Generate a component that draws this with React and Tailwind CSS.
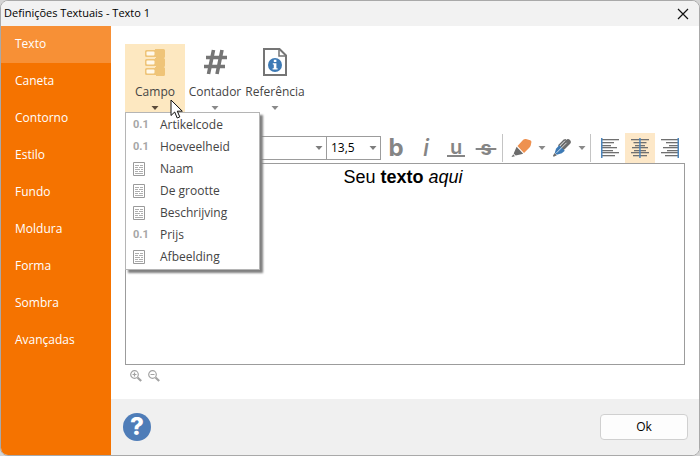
import React, { useState } from 'react';

const TABS = ['Texto', 'Caneta', 'Contorno', 'Estilo', 'Fundo', 'Moldura', 'Forma', 'Sombra', 'Avançadas'];

const FIELDS = [
  { label: 'Artikelcode', type: 'number' },
  { label: 'Hoeveelheid', type: 'number' },
  { label: 'Naam', type: 'text' },
  { label: 'De grootte', type: 'text' },
  { label: 'Beschrijving', type: 'text' },
  { label: 'Prijs', type: 'number' },
  { label: 'Afbeelding', type: 'text' },
];

const Caret = ({ className = '' }) => (
  <svg viewBox="0 0 8 4" className={`pointer-events-none h-1 w-2 shrink-0 ${className}`} aria-hidden="true">
    <path d="M0.5 0h7L4 4z" fill="currentColor" />
  </svg>
);

const FieldIcon = () => (
  <svg viewBox="0 0 22 28" className="h-7 w-[22px]" aria-hidden="true">
    {[1, 10, 19].map(y => (
      <g key={y} transform={`translate(0 ${y})`}>
        <path d="M2.500 1H11V0h8.500q1.500 0 1.500 1.500v6q0 1.500-1.500 1.500H12V8H2.500Q1 8 1 6.500v-4Q1 1 2.500 1z" fill="#efc478" />
        <rect x="2.500" y="2.500" width="8" height="4" rx="1" fill="#fff8ea" />
      </g>
    ))}
  </svg>
);

const CounterIcon = () => (
  <svg viewBox="0 0 24 26" className="h-[26px] w-6" fill="none" stroke="#757575" strokeWidth="3.6" aria-hidden="true">
    <path d="M10.500 1L5.500 25M19 1l-5 24M3 8.500h21M1 17.500h21" />
  </svg>
);

const ReferenceIcon = () => (
  <svg viewBox="0 0 24 28" className="h-7 w-6" aria-hidden="true">
    <path d="M1 1h15.500L23 7.500V27H1z" fill="#fff" stroke="#757575" strokeWidth="2" />
    <path d="M16 1.500V8h6.500" fill="none" stroke="#757575" strokeWidth="1.500" />
    <circle cx="12" cy="17" r="7" fill="#3d7ab5" />
    <path d="M10.800 11.800h2.600v2.200h-2.600zM9.800 15.200h3.600v5h1.200v1.400H9.600v-1.400h1.200v-3.600h-1z" fill="#fff" />
  </svg>
);

const TextFieldIcon = () => (
  <svg viewBox="0 0 12 14" className="h-3.5 w-3" fill="none" stroke="#9a9a9a" aria-hidden="true">
    <path d="M.5.5h11v13H.5z" />
    <path d="M2 3.500h4M7 3.500h3M2 5.500h3M6 5.500h4M2 7.500h5M8 7.500h2M2 9.500h3M6 9.500h4M2 11.500h8" strokeOpacity=".8" />
  </svg>
);

const MarkerIcon = () => (
  <svg viewBox="0 0 21 20" className="h-5 w-[21px]" aria-hidden="true">
    <path d="M12.200 1.800Q13.500.6 15 1l4.200 1.300q1.500.5 1.200 2l-.7 3.200q-.3 1.200-1.200 2L13 15 6.500 8z" fill="#ee9150" />
    <path d="M5.600 8.800l6.600 7-3 .7-4.500 1-2-2z" fill="#6c6c6c" />
    <path d="M2.200 16.300L4 18.200l-3.500.8z" fill="#6c6c6c" />
  </svg>
);

const PenIcon = () => (
  <svg viewBox="0 0 20 20" className="size-5" fill="none" aria-hidden="true">
    <path d="M11 9l5-5" stroke="#6c6c6c" strokeWidth="5.500" strokeLinecap="round" />
    <path d="M6.500 7.800L12 2.200l2-.4" stroke="#6c6c6c" strokeWidth="1.400" />
    <path d="M7.200 7.200l5.600 5.600-3 2.500-5 1.500-2-2 1.200-4z" fill="#3d7ab5" />
    <path d="M4.500 14.800L14.500 4.800" stroke="#fff" strokeWidth="1" strokeOpacity=".75" />
    <path d="M2.600 15l2.200 2.200-3 1.600-1-.9z" fill="#6c6c6c" />
  </svg>
);

const LINES = [
  { y: 1, w: 18 },
  { y: 4, w: 13 },
  { y: 7, w: 10 },
  { y: 9, w: 16 },
  { y: 12, w: 12 },
  { y: 14, w: 18 },
  { y: 17, w: 14 },
];

const AlignIcon = ({ side }) => (
  <svg viewBox="0 0 18 20" className="h-5 w-[18px]" aria-hidden="true">
    {LINES.map(({ y, w }) => {
      const x = side === 'left' ? 0 : side === 'right' ? 18 - w : 9 - w / 2;
      return <rect key={y} x={x} y={y} width={w} height="1.300" fill="#707070" />;
    })}
    <rect x={side === 'left' ? 0 : side === 'right' ? 16.5 : 8.2} y="0" width="1.500" height="20" fill="#4c86bd" />
  </svg>
);

const ZoomIcon = ({ plus }) => (
  <svg viewBox="0 0 12 12" className="size-3" fill="none" stroke="#a3a3a3" aria-hidden="true">
    <circle cx="4.500" cy="4.500" r="3.800" strokeWidth="1.200" />
    <path d="M2.500 4.500h4" strokeWidth="1.200" />
    {plus && <path d="M4.500 2.500v4" strokeWidth="1.200" />}
    <path d="M7.500 7.500L11.200 11" strokeWidth="2.200" />
  </svg>
);

const ToolButton = ({ label, icon, open }) => (
  <button
    type="button"
    aria-haspopup="menu"
    aria-expanded={open}
    className={`flex h-17 w-15 flex-col items-center pt-1 ${open ? 'bg-[#fde8c1] text-[#5b4b3a]' : 'text-[#8a8a8a]'}`}
  >
    <span className="flex h-7 items-center">{icon}</span>
    <span className="mt-2 whitespace-nowrap leading-4 text-[#444]">{label}</span>
    <Caret className="mt-1.5" />
  </button>
);

const FormatButton = ({ label, active, children }) => (
  <button
    type="button"
    aria-label={label}
    aria-pressed={active}
    className={`flex h-[30px] w-[30px] items-center justify-center ${active ? 'bg-[#fde8c8]' : ''}`}
  >
    {children}
  </button>
);

const Combo = ({ label, value, className }) => (
  <div className={`relative flex h-6 items-center border border-[#9c9c9c] bg-white ${className}`}>
    <select aria-label={label} defaultValue={value} className="h-full w-full appearance-none px-1 text-black outline-none">
      <option value={value}>{value}</option>
    </select>
    <Caret className="absolute right-[3px] text-[#7d7d7d]" />
  </div>
);

const FieldMenu = () => (
  <ul role="menu" className="absolute left-0 top-full z-10 w-[135px] border border-[#b5b5b5] bg-white py-px shadow-[3px_3px_2px_#808080]">
    {FIELDS.map(({ label, type }) => (
      <li key={label} role="none">
        <button type="button" role="menuitem" className="flex h-[22px] w-full items-center pl-1.5 text-left text-[#444]">
          <span className="flex w-[28px] items-center pl-px">
            {type === 'number' ? (
              <span className="font-['Roboto',sans-serif] text-[11px] font-bold text-[#a6a6a6]">0.1</span>
            ) : (
              <TextFieldIcon />
            )}
          </span>
          {label}
        </button>
      </li>
    ))}
  </ul>
);

const Pointer = () => (
  <svg viewBox="0 0 13 20" className="pointer-events-none absolute left-[45px] top-[55px] z-20 h-5 w-[13px]" aria-hidden="true">
    <path d="M1 1v15.500l3.700-3.500 2.500 6 2.600-1.100-2.500-5.700h5z" fill="#fff" stroke="#111" strokeWidth="1" />
  </svg>
);

export default function App() {
  const [tab, setTab] = useState('Texto');

  return (
    <div className="h-screen bg-[#d4d4d4] font-['Open_Sans','Noto_Sans',sans-serif] text-[12px]">
      <div className="flex h-full flex-col overflow-hidden rounded-lg border border-[#a9a9a9] bg-white">
        <header className="flex h-[25px] shrink-0 items-center justify-between bg-[#f2f2f2] pl-[3px] pr-2.5">
          <h1 className="text-[11px] text-black">Definições Textuais - Texto 1</h1>
          <button type="button" aria-label="Fechar">
            <svg viewBox="0 0 12 12" className="size-3" stroke="#111" strokeWidth="1.200" aria-hidden="true">
              <path d="M1 1l10 10M11 1L1 11" />
            </svg>
          </button>
        </header>

        <div className="flex min-h-0 flex-1">
          <nav className="flex w-[110px] shrink-0 flex-col bg-[#f57300] text-white">
            {TABS.map(name => (
              <button
                key={name}
                type="button"
                onClick={() => setTab(name)}
                className={`h-[37px] shrink-0 pb-0.5 pl-3.5 text-left ${tab === name ? 'bg-[#f79036]' : ''}`}
              >
                {name}
              </button>
            ))}
          </nav>

          <div className="flex min-w-0 flex-1 flex-col">
            <main className="flex min-h-0 flex-1 flex-col px-3.5 pt-[18px]">
              <div className="relative flex self-start">
                <ToolButton label="Campo" icon={<FieldIcon />} open />
                <ToolButton label="Contador" icon={<CounterIcon />} />
                <ToolButton label="Referência" icon={<ReferenceIcon />} />
                <FieldMenu />
                <Pointer />
              </div>

              <div className="mt-[21px] flex h-[30px] items-center">
                <Combo label="Fonte" value="" className="min-w-0 flex-1" />
                <Combo label="Tamanho" value="13,5" className="w-[54px] border-l-0" />
                <div className="flex font-['Inter',sans-serif] text-[#858585]">
                  <FormatButton label="Negrito"><span className="text-2xl leading-none font-bold">b</span></FormatButton>
                  <FormatButton label="Itálico"><span className="text-2xl leading-none font-medium italic">i</span></FormatButton>
                  <FormatButton label="Sublinhado">
                    <span className="w-[18px] border-b-2 border-current text-xl leading-4 font-semibold">u</span>
                  </FormatButton>
                  <FormatButton label="Tachado">
                    <span className="text-xl leading-none font-bold line-through">&nbsp;s&nbsp;</span>
                  </FormatButton>
                </div>
                <div className="ml-px flex h-7 items-center gap-1.5 border-x border-[#c4c4c4] pl-2 pr-1 text-[#8a8a8a]">
                  <button type="button" aria-label="Marcador" className="flex items-center gap-1.5">
                    <MarkerIcon />
                    <Caret />
                  </button>
                  <button type="button" aria-label="Cor do texto" className="flex items-center gap-1.5">
                    <PenIcon />
                    <Caret />
                  </button>
                </div>
                <div className="flex pl-1">
                  <FormatButton label="Alinhar à esquerda"><AlignIcon side="left" /></FormatButton>
                  <FormatButton label="Centralizar" active><AlignIcon side="center" /></FormatButton>
                  <FormatButton label="Alinhar à direita"><AlignIcon side="right" /></FormatButton>
                </div>
              </div>

              <div
                role="textbox"
                aria-multiline="true"
                aria-label="Texto"
                contentEditable
                suppressContentEditableWarning
                className="min-h-0 flex-1 border border-[#9c9c9c] pt-px pr-1 text-center font-['Liberation_Sans',sans-serif] text-lg leading-6 text-black outline-none"
              >
                Seu <b>texto</b> <i>aqui</i>
              </div>

              <div className="flex h-[34px] shrink-0 gap-1.5 pl-[5px] pt-[5px]">
                <button type="button" aria-label="Ampliar" className="size-3"><ZoomIcon plus /></button>
                <button type="button" aria-label="Reduzir" className="size-3"><ZoomIcon /></button>
              </div>
            </main>

            <footer className="flex h-14 shrink-0 items-center justify-between bg-[#f0f0f0] pl-3 pr-[11px]">
              <button
                type="button"
                aria-label="Ajuda"
                className="flex size-7 items-center justify-center rounded-full bg-[#4f7db8] font-['Inter',sans-serif] text-2xl leading-none font-extrabold text-white"
              >
                ?
              </button>
              <button type="button" className="h-[26px] w-[88px] rounded border border-[#d0d0d0] bg-[#fdfdfd] text-black">
                Ok
              </button>
            </footer>
          </div>
        </div>
      </div>
    </div>
  );
}
